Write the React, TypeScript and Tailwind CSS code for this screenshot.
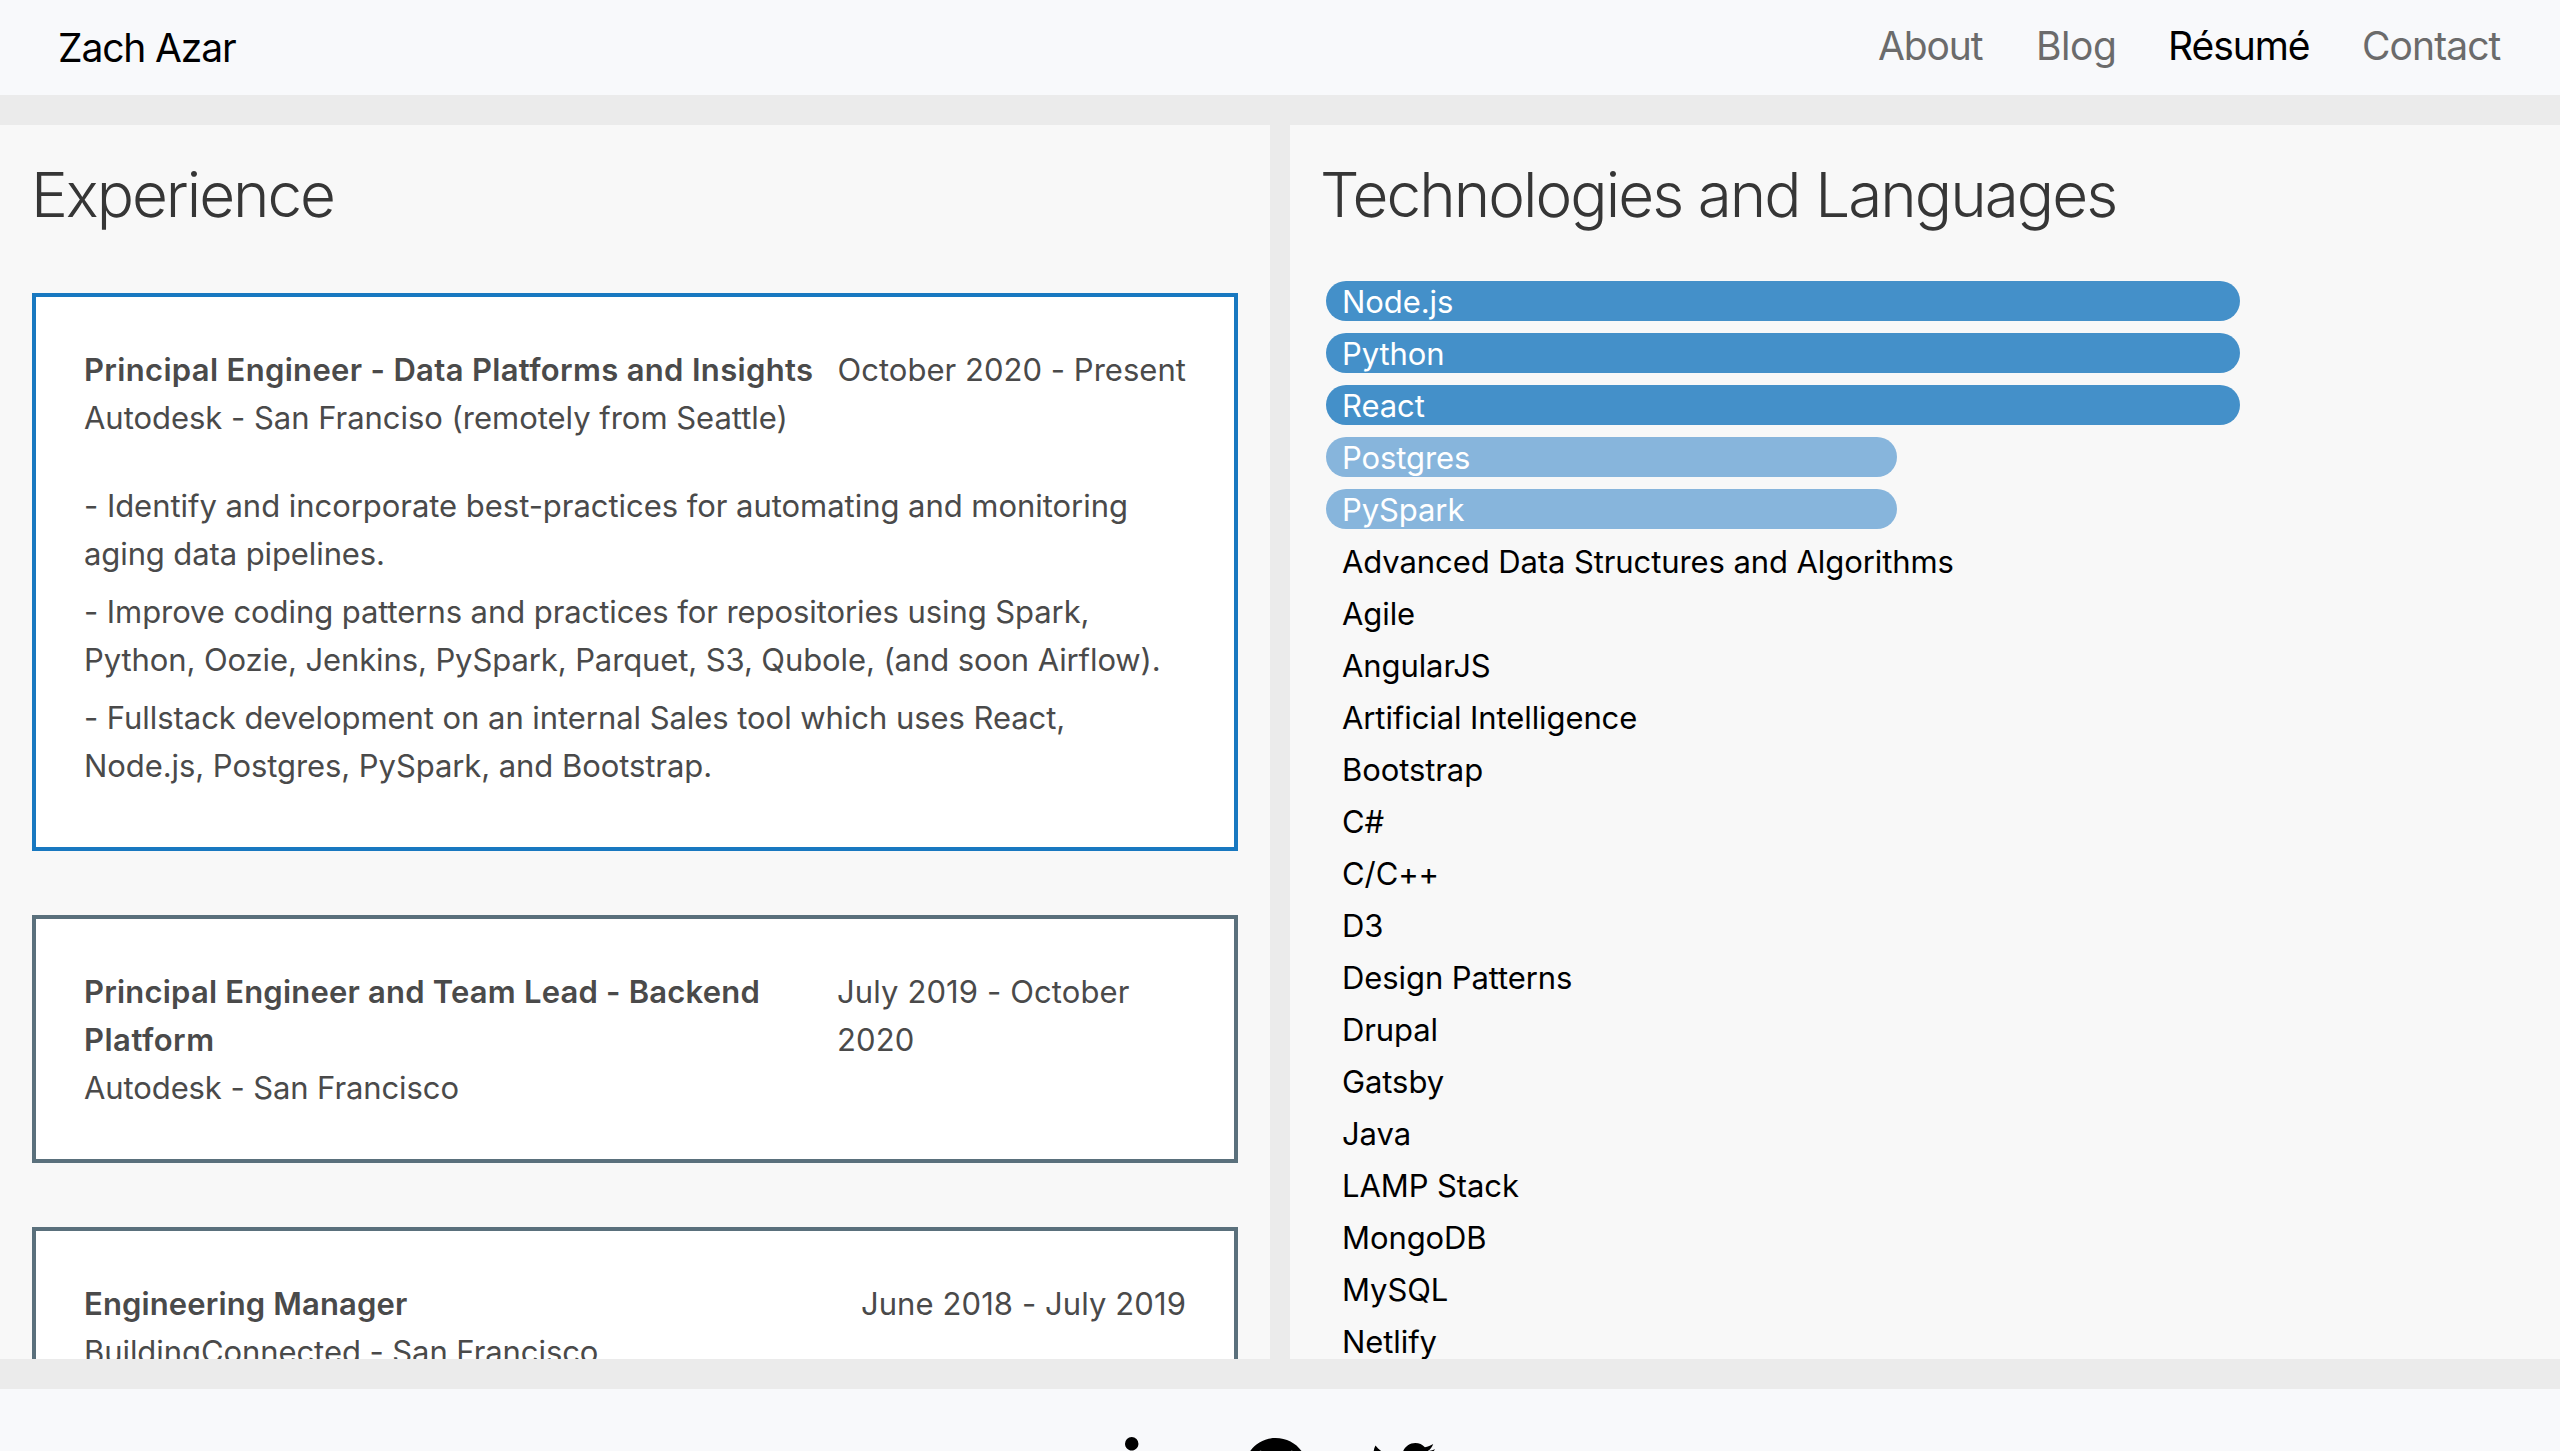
import React from 'react';
import { FaGithub, FaLinkedinIn, FaTwitter } from 'react-icons/fa';

type Line = [text: string, tracking: string];

interface Job {
  title: Line[];
  date: Line[];
  place: Line;
  border: string;
  notes: Line[][];
}

const navItems = [
  { label: 'About', className: 'w-[158px] tracking-[-1.1px] text-[#6b6b6b]' },
  { label: 'Blog', className: 'w-[132px] tracking-[-0.45px] text-[#6b6b6b]' },
  { label: 'Résumé', className: 'w-[194px] tracking-[-1.05px] text-black' },
  { label: 'Contact', className: 'w-[141px] tracking-[-0.92px] text-[#6b6b6b]' },
];

const jobs: Job[] = [
  {
    title: [['Principal Engineer - Data Platforms and Insights', 'tracking-[0.33px]']],
    date: [['October 2020 - Present', 'tracking-[0.03px]']],
    place: ['Autodesk - San Franciso (remotely from Seattle)', 'tracking-[-0.03px]'],
    border: 'border-[#1878c0]',
    notes: [
      [
        ['- Identify and incorporate best-practices for automating and monitoring', 'tracking-[-0.04px]'],
        ['aging data pipelines.', 'tracking-[-0.1px]'],
      ],
      [
        ['- Improve coding patterns and practices for repositories using Spark,', 'tracking-[-0.075px]'],
        ['Python, Oozie, Jenkins, PySpark, Parquet, S3, Qubole, (and soon Airflow).', 'tracking-[-0.1px]'],
      ],
      [
        ['- Fullstack development on an internal Sales tool which uses React,', 'tracking-[-0.055px]'],
        ['Node.js, Postgres, PySpark, and Bootstrap.', 'tracking-[-0.07px]'],
      ],
    ],
  },
  {
    title: [
      ['Principal Engineer and Team Lead - Backend', 'tracking-[0.2px]'],
      ['Platform', 'tracking-[0.5px]'],
    ],
    date: [
      ['July 2019 - October', 'tracking-[0.11px]'],
      ['2020', 'tracking-[0.09px]'],
    ],
    place: ['Autodesk - San Francisco', 'tracking-[-0.1px]'],
    border: 'border-[#5a707c]',
    notes: [],
  },
  {
    title: [['Engineering Manager', 'tracking-[0.13px]']],
    date: [['June 2018 - July 2019', 'tracking-[0.09px]']],
    place: ['BuildingConnected - San Francisco', 'tracking-[-0.07px]'],
    border: 'border-[#5a707c]',
    notes: [],
  },
];

const skills = [
  { name: 'Node.js', bar: 'w-[914px] bg-[#4490c9]' },
  { name: 'Python', bar: 'w-[914px] bg-[#4490c9]' },
  { name: 'React', bar: 'w-[914px] bg-[#4490c9]' },
  { name: 'Postgres', bar: 'w-[571px] bg-[#87b5dc]' },
  { name: 'PySpark', bar: 'w-[571px] bg-[#87b5dc]' },
];

const otherSkills = [
  'Advanced Data Structures and Algorithms',
  'Agile',
  'AngularJS',
  'Artificial Intelligence',
  'Bootstrap',
  'C#',
  'C/C++',
  'D3',
  'Design Patterns',
  'Drupal',
  'Gatsby',
  'Java',
  'LAMP Stack',
  'MongoDB',
  'MySQL',
  'Netlify',
];

function Lines({ lines }: { lines: Line[] }) {
  return (
    <>
      {lines.map(([text, tracking]) => (
        <span key={text} className={`block whitespace-nowrap ${tracking}`}>
          {text}
        </span>
      ))}
    </>
  );
}

function JobCard({ job }: { job: Job }) {
  return (
    <article className={`mb-16 border-4 bg-white px-12 pt-[49px] pb-[47px] ${job.border}`}>
      <div className="flex justify-between">
        <div>
          <h2 className="font-semibold">
            <Lines lines={job.title} />
          </h2>
          <Lines lines={[job.place]} />
        </div>
        <div className={job.date.length > 1 ? 'w-[349px]' : ''}>
          <Lines lines={job.date} />
        </div>
      </div>
      {job.notes.length > 0 && (
        <div className="mt-10">
          {job.notes.map((note) => (
            <p key={note[0][0]} className="mb-2.5">
              <Lines lines={note} />
            </p>
          ))}
        </div>
      )}
    </article>
  );
}

export default function App() {
  return (
    <div className="flex h-[1451px] w-[2560px] flex-col overflow-hidden bg-[#ebebeb] font-['Inter',sans-serif]">
      <header className="flex h-[95px] shrink-0 items-start justify-between bg-[#f8f9fb] pl-[58px] pr-[57px] text-[39px] leading-[48px]">
        <a className="pt-6 tracking-[-1.15px] text-black">Zach Azar</a>
        <nav className="flex pt-[22px]">
          {navItems.map((item) => (
            <a key={item.label} className={item.className}>
              {item.label}
            </a>
          ))}
        </nav>
      </header>

      <main className="my-[30px] flex h-[1234px] shrink-0 gap-5">
        <section className="w-[1270px] overflow-hidden bg-[#f8f8f8] px-8 pt-[34px]">
          <h1 className="-ml-px mb-[62px] text-[62px] font-light leading-[72px] tracking-[-2.05px] text-[#363636]">
            Experience
          </h1>
          <div className="text-[31px] leading-[48px] text-[#4a4a4a]">
            {jobs.map((job) => (
              <JobCard key={job.place[0] + job.date[0][0]} job={job} />
            ))}
          </div>
        </section>

        <section className="w-[1270px] overflow-hidden bg-[#f8f8f8] px-8 pt-[34px]">
          <h1 className="-ml-0.5 mb-[50px] whitespace-nowrap text-[62px] font-light leading-[72px] tracking-[-1.97px] text-[#363636]">
            Technologies and Languages
          </h1>
          <ul className="flex flex-col gap-3 pl-1 text-[31px] leading-[39px] tracking-[-0.09px]">
            {skills.map((skill) => (
              <li key={skill.name} className={`h-10 rounded-full pl-4 pt-px text-white ${skill.bar}`}>
                {skill.name}
              </li>
            ))}
            {otherSkills.map((name) => (
              <li key={name} className="h-10 pl-4 pt-px text-black">
                {name}
              </li>
            ))}
          </ul>
        </section>
      </main>

      <footer className="flex h-[160px] shrink-0 justify-center gap-16 bg-[#f8f9fb] pt-12 text-black">
        <FaLinkedinIn className="h-16 w-14" />
        <FaGithub className="h-16 w-[62px]" />
        <FaTwitter className="size-16" />
      </footer>
    </div>
  );
}
